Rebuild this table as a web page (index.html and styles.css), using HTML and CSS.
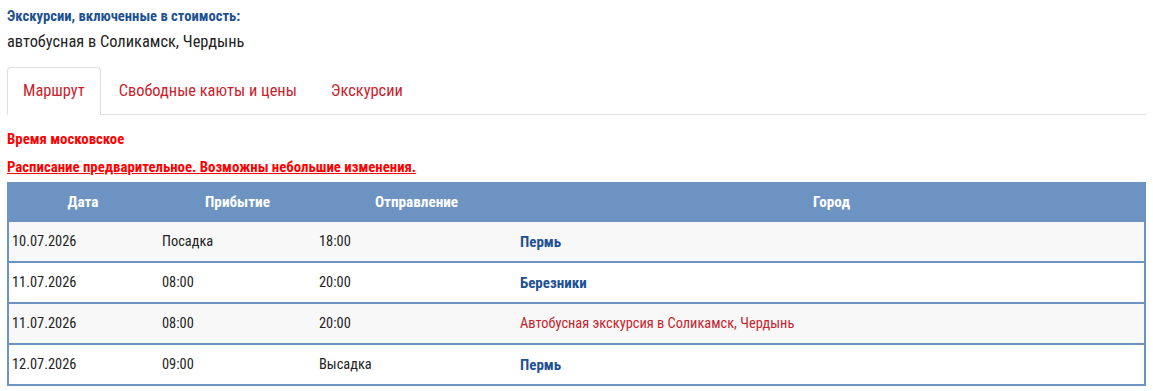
FILE: index.html
```html
<!DOCTYPE html>
<html lang="ru">
<head>
<meta charset="utf-8">
<link rel="stylesheet" href="styles.css">
</head>
<body>
<div class="page">
  <div class="incl-title">Экскурсии, включенные в стоимость:</div>
  <div class="incl-text">автобусная в Соликамск, Чердынь</div>
  <ul class="tabs">
    <li class="tab active"><a href="#">Маршрут</a></li>
    <li class="tab"><a href="#">Свободные каюты и цены</a></li>
    <li class="tab"><a href="#">Экскурсии</a></li>
  </ul>
  <p class="note">Время московское</p>
  <p class="note underline">Расписание предварительное. Возможны небольшие изменения.</p>
  <table class="route">
    <colgroup>
      <col class="c1"><col class="c2"><col class="c3"><col class="c4">
    </colgroup>
    <thead>
      <tr><th>Дата</th><th>Прибытие</th><th>Отправление</th><th>Город</th></tr>
    </thead>
    <tbody>
      <tr class="odd"><td>10.07.2026</td><td>Посадка</td><td>18:00</td><td><a class="city" href="#">Пермь</a></td></tr>
      <tr><td>11.07.2026</td><td>08:00</td><td>20:00</td><td><a class="city" href="#">Березники</a></td></tr>
      <tr class="odd"><td>11.07.2026</td><td>08:00</td><td>20:00</td><td><span class="exc">Автобусная экскурсия в Соликамск, Чердынь</span></td></tr>
      <tr><td>12.07.2026</td><td>09:00</td><td>Высадка</td><td><a class="city" href="#">Пермь</a></td></tr>
    </tbody>
  </table>
</div>
</body>
</html>
```
FILE: styles.css
```css
html, body {
  margin: 0;
  padding: 0;
  background: #fff;
}
body {
  font-family: "Liberation Sans Narrow", "Arial Narrow", "Roboto Condensed", "Noto Sans Condensed", sans-serif;
  color: #222;
}
.page {
  padding: 6px 7px 0 7px;
}
.incl-title {
  font-size: 14.6px;
  font-weight: bold;
  color: #1d5192;
  line-height: 20px;
}
.incl-text {
  font-size: 16.4px;
  line-height: 22px;
  margin-top: 5px;
}
.tabs {
  list-style: none;
  margin: 14px 0 0 0;
  padding: 0;
  display: flex;
  border-bottom: 1px solid #ddd;
}
.tab {
  margin-right: 2px;
  margin-bottom: -1px;
}
.tab a {
  display: block;
  padding: 12px 15px 13px 15px;
  line-height: 21px;
  font-size: 16.4px;
  color: #c8232c;
  text-decoration: none;
  border: 1px solid transparent;
  border-radius: 4px 4px 0 0;
}
.tab.active a {
  border-color: #ddd;
  border-bottom-color: #fff;
  background: #fff;
}
.note {
  margin: 15px 0 0 0;
  font-size: 14.8px;
  font-weight: bold;
  color: #f00;
  line-height: 18px;
}
.note.underline {
  margin-top: 10px;
  text-decoration: underline;
}
.route {
  margin-top: 6px;
  width: 100%;
  table-layout: fixed;
  border-collapse: separate;
  border-spacing: 0;
  font-size: 14.4px;
}
.c1 { width: 152px; }
.c2 { width: 157px; }
.c3 { width: 201px; }
.route th {
  background: #6d93c2;
  color: #fff;
  font-weight: bold;
  font-size: 15.2px;
  height: 40px;
  padding: 0;
  text-align: center;
}
.route td {
  height: 39px;
  padding: 0 3px;
  border-bottom: 2px solid #6d93c2;
  text-align: left;
  white-space: nowrap;
}
.route td:first-child { border-left: 2px solid #6d93c2; }
.route td:last-child { border-right: 2px solid #6d93c2; }
.route tr.odd td { background: #f8f8f8; }
.city {
  color: #1d5192;
  font-weight: bold;
  font-size: 15px;
  text-decoration: none;
}
.exc {
  color: #c8232c;
}
```
